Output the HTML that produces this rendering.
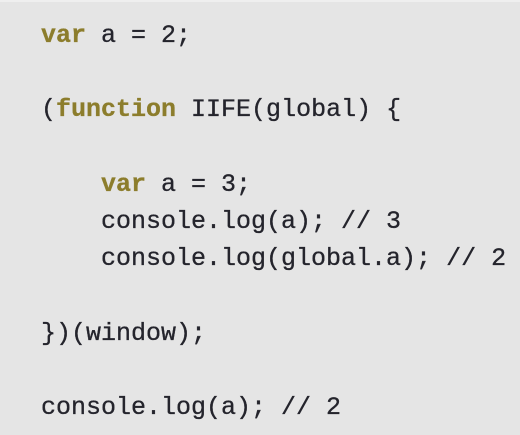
<!DOCTYPE html>
<html><head><style>
html,body{margin:0;padding:0}
body{width:520px;height:435px;background:#e5e5e5;overflow:hidden;border-top:2px solid #efefef;box-sizing:border-box}
pre{margin:0;position:absolute;left:41px;top:17px;font-family:"Liberation Mono",monospace;font-size:25px;line-height:37.2px;color:#24242c;-webkit-text-stroke:0.3px #24242c}
b{color:#8c7d2c;-webkit-text-stroke:0.3px #8c7d2c}
</style></head><body>
<pre><b>var</b> a = 2;

(<b>function</b> IIFE(global) {

    <b>var</b> a = 3;
    console.log(a); // 3
    console.log(global.a); // 2

})(window);

console.log(a); // 2</pre>
</body></html>
